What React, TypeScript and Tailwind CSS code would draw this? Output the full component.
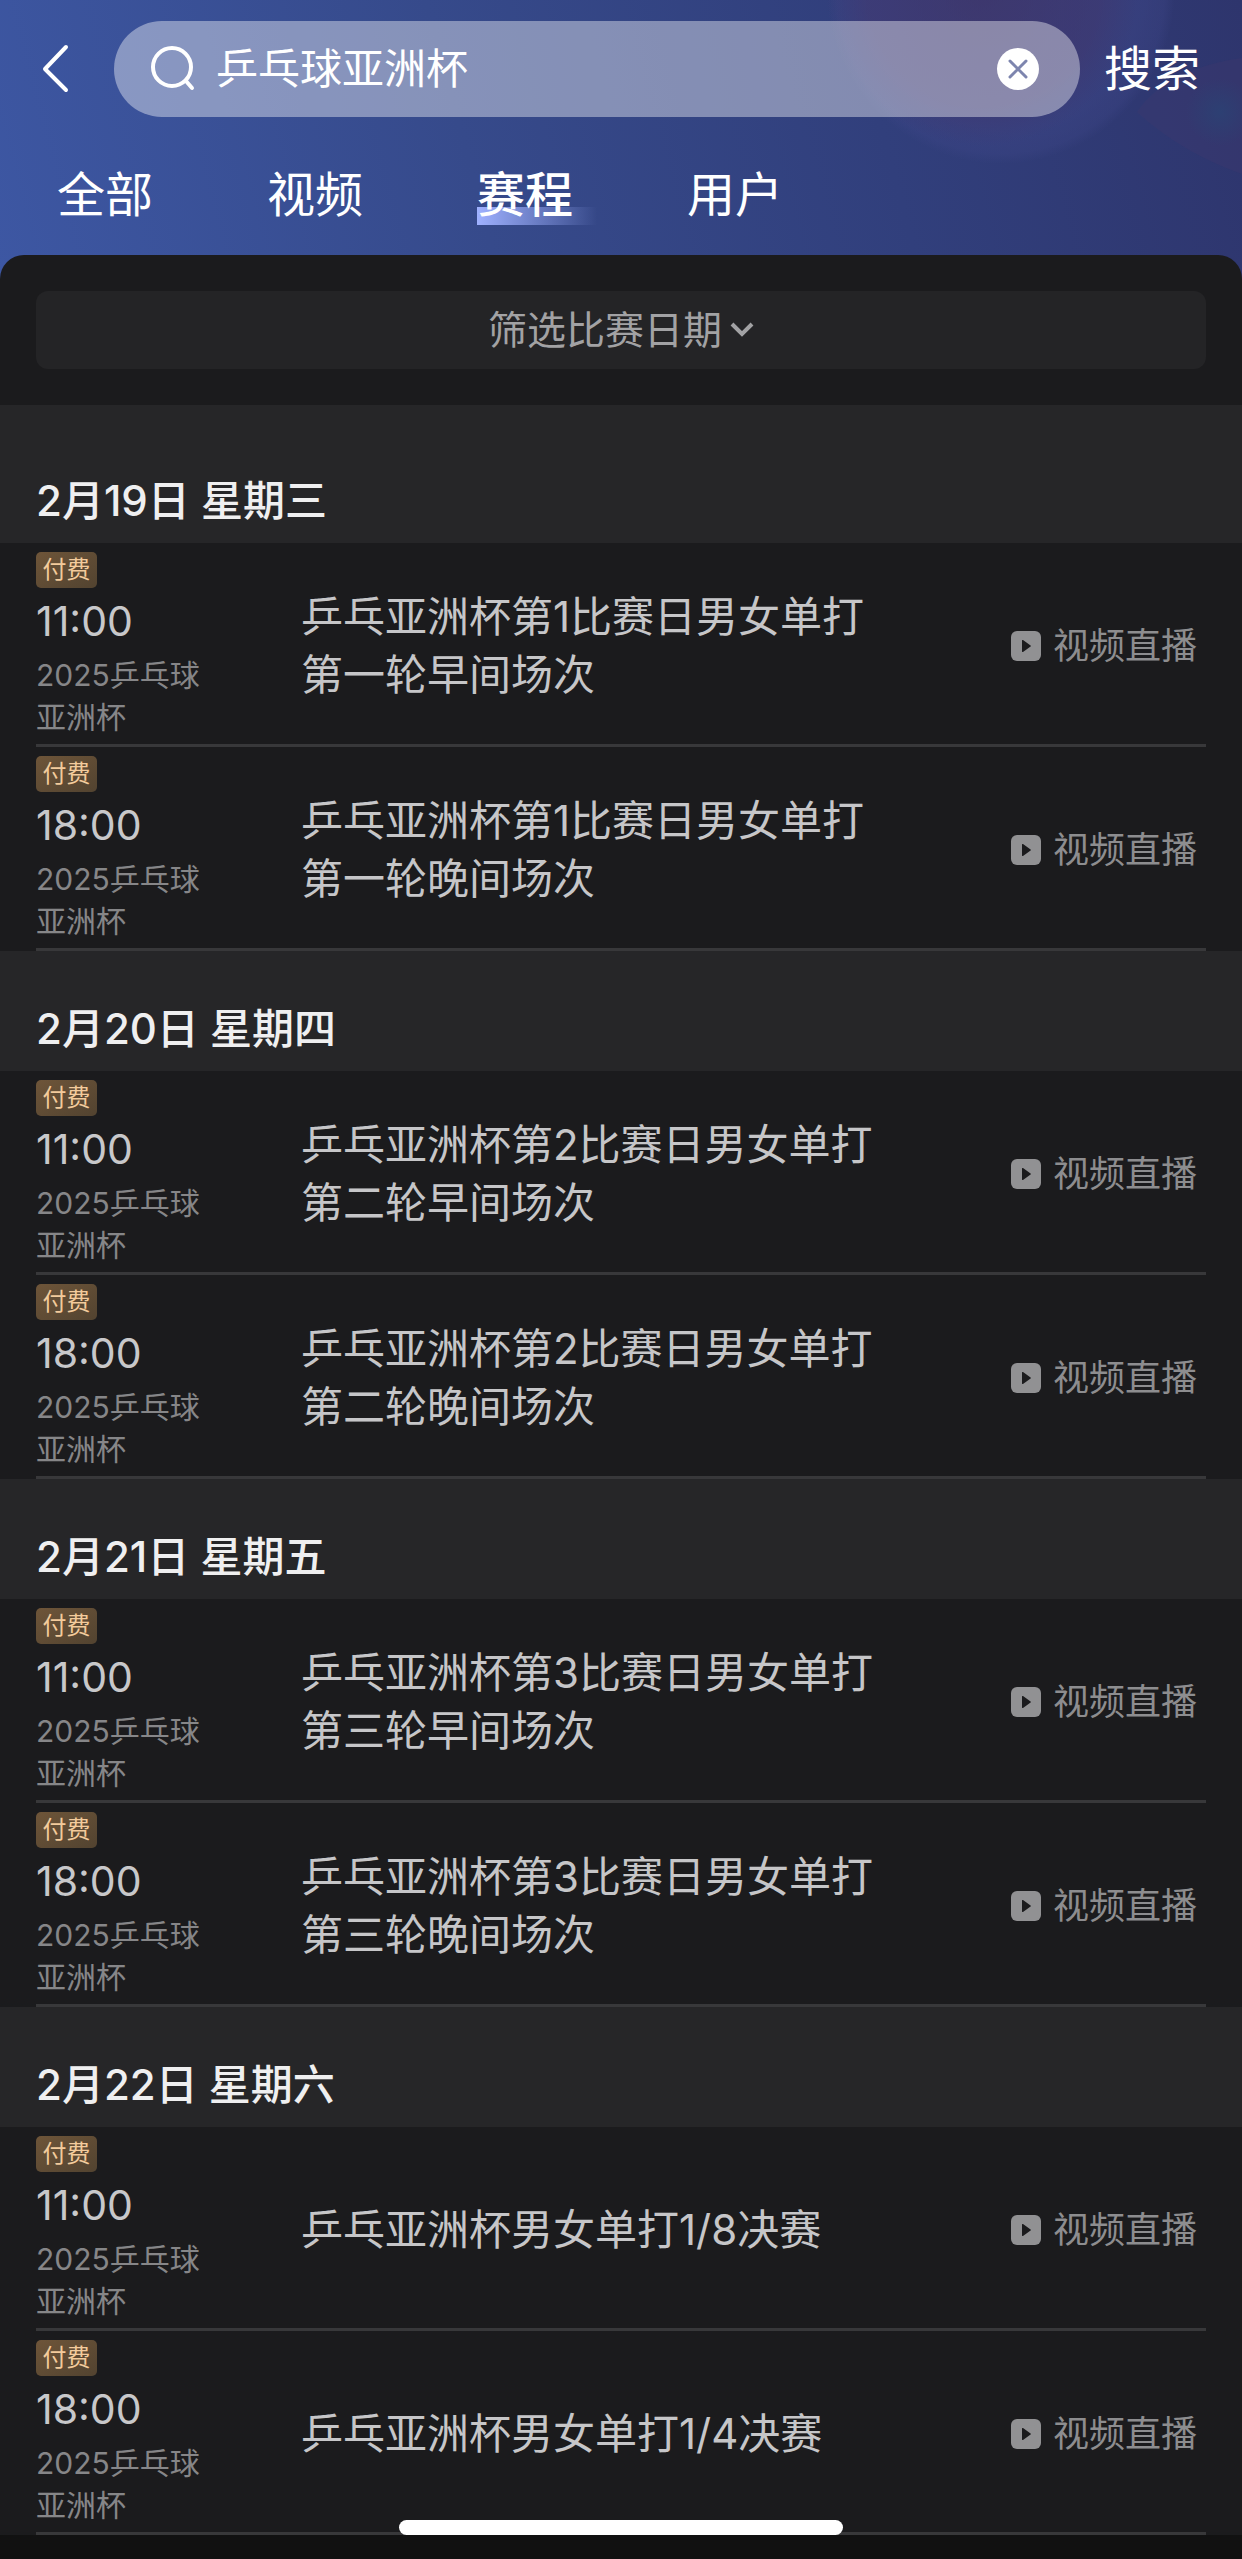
import { useState } from "react";

type Match = { time: string; title: string };
type Day = { date: string; matches: Match[] };

const tabs = ["全部", "视频", "赛程", "用户"];

const days: Day[] = [
  {
    date: "2月19日 星期三",
    matches: [
      { time: "11:00", title: "乒乓亚洲杯第1比赛日男女单打第一轮早间场次" },
      { time: "18:00", title: "乒乓亚洲杯第1比赛日男女单打第一轮晚间场次" },
    ],
  },
  {
    date: "2月20日 星期四",
    matches: [
      { time: "11:00", title: "乒乓亚洲杯第2比赛日男女单打第二轮早间场次" },
      { time: "18:00", title: "乒乓亚洲杯第2比赛日男女单打第二轮晚间场次" },
    ],
  },
  {
    date: "2月21日 星期五",
    matches: [
      { time: "11:00", title: "乒乓亚洲杯第3比赛日男女单打第三轮早间场次" },
      { time: "18:00", title: "乒乓亚洲杯第3比赛日男女单打第三轮晚间场次" },
    ],
  },
  {
    date: "2月22日 星期六",
    matches: [
      { time: "11:00", title: "乒乓亚洲杯男女单打1/8决赛" },
      { time: "18:00", title: "乒乓亚洲杯男女单打1/4决赛" },
    ],
  },
];

function HeaderGlow() {
  return (
    <svg
      className="pointer-events-none absolute right-0 top-0 h-[280px] w-[450px]"
      viewBox="0 0 450 280"
      aria-hidden="true"
    >
      <defs>
        <radialGradient id="core">
          <stop offset="0" stopColor="#42305f" stopOpacity="0.55" />
          <stop offset="0.75" stopColor="#42346a" stopOpacity="0.45" />
          <stop offset="1" stopColor="#42346a" stopOpacity="0" />
        </radialGradient>
        <radialGradient id="halo">
          <stop offset="0.8" stopColor="#3e4688" stopOpacity="0.5" />
          <stop offset="0.94" stopColor="#3e4688" stopOpacity="0.35" />
          <stop offset="1" stopColor="#3e4688" stopOpacity="0" />
        </radialGradient>
        <radialGradient id="teal">
          <stop offset="0" stopColor="#2b4274" stopOpacity="0.8" />
          <stop offset="1" stopColor="#2b4274" stopOpacity="0" />
        </radialGradient>
      </defs>
      <circle cx="209" cy="-10" r="174" fill="url(#halo)" />
      <circle cx="190" cy="-10" r="156" fill="url(#core)" />
      <path d="M345 112c20-30 60-48 105-54v116c-40-14-74-34-105-62z" fill="#42386c" opacity="0.3" />
      <circle cx="428" cy="112" r="34" fill="url(#teal)" />
    </svg>
  );
}

function SearchBar() {
  const [query, setQuery] = useState("乒乓球亚洲杯");

  return (
    <form
      className="relative flex h-[138px] items-center pl-9 pr-[42px]"
      onSubmit={(e) => e.preventDefault()}
    >
      <button type="button" aria-label="返回" className="mr-[38px] w-10 shrink-0">
        <svg width="40" height="54" viewBox="0 0 40 54" fill="none" stroke="#fff" strokeWidth="4" strokeLinecap="round" strokeLinejoin="round">
          <path d="M30 5 9 27l21 21" />
        </svg>
      </button>

      <div className="flex h-24 min-w-0 flex-1 items-center rounded-full bg-white/40 pl-9 pr-[41px]">
        <svg className="shrink-0" width="48" height="48" viewBox="0 0 48 48" fill="none" stroke="#fff" strokeWidth="4" strokeLinecap="round">
          <circle cx="22" cy="22" r="19" />
          <path d="m36 36 6 7" />
        </svg>
        <input
          type="text"
          aria-label="搜索内容"
          value={query}
          onChange={(e) => setQuery(e.target.value)}
          className="ml-[18px] min-w-0 flex-1 bg-transparent text-[42px] leading-[60px] text-white outline-none"
        />
        <button type="button" aria-label="清除" onClick={() => setQuery("")} className="shrink-0">
          <svg width="42" height="42" viewBox="0 0 42 42">
            <circle cx="21" cy="21" r="21" fill="#fff" />
            <path d="m13 13 16 16M29 13 13 29" stroke="#7d85ae" strokeWidth="3" strokeLinecap="round" />
          </svg>
        </button>
      </div>

      <button type="submit" className="ml-6 shrink-0 text-[48px] leading-[60px] text-white">
        搜索
      </button>
    </form>
  );
}

function PlayIcon() {
  return (
    <svg className="shrink-0" width="30" height="30" viewBox="0 0 30 30" aria-hidden="true">
      <rect width="30" height="30" rx="6" fill="#919193" />
      <path d="M11 9.500v11a.6.6 0 0 0 1 .4l7.600-5.300a.8.8 0 0 0 0-1.200L12 9.100a.6.6 0 0 0-1 .4z" fill="#1b1b1d" />
    </svg>
  );
}

function MatchRow({ match }: { match: Match }) {
  return (
    <li className="mx-9 flex h-[204px] items-center border-b-[3px] border-[#38383a]">
      <div className="w-[180px] shrink-0 self-start pt-[9px]">
        <span className="flex h-9 w-[61px] items-center justify-center rounded-[5px] bg-linear-to-br from-[#6e5539] to-[#524330] text-[24px] leading-9 text-[#f3cb9c]">
          付费
        </span>
        <time className="block text-[41px] leading-[66px] text-[#c8c8ca]">{match.time}</time>
        <p className="text-[30px] leading-[42px] text-[#868688]">2025乒乓球亚洲杯</p>
      </div>
      <h3 className="ml-[85px] mt-1 w-[590px] text-[42px] leading-[58px] text-[#c6c6c8]">
        {match.title}
      </h3>
      <a href="#live" className="ml-auto mr-[9px] mt-1 flex shrink-0 items-center gap-3 text-[36px] leading-[48px] text-[#8d8d8f]">
        <PlayIcon />
        视频直播
      </a>
    </li>
  );
}

export default function App() {
  const [active, setActive] = useState("赛程");

  return (
    <div className="relative min-h-screen bg-[#111111] pb-6 font-['Inter','Noto_Sans_CJK_SC',sans-serif]">
      <header className="relative overflow-hidden bg-linear-[75deg,#3d57a3_0%,#364a8b_38%,#313f7c_70%,#2e356d_100%] pb-6">
        <HeaderGlow />
        <SearchBar />

        <nav className="relative flex h-[117px] items-center gap-[114px] pb-1 pl-[57px]">
          {tabs.map((tab) => (
            <button
              key={tab}
              type="button"
              onClick={() => setActive(tab)}
              className={
                tab === active
                  ? "relative text-[48px] font-medium leading-[60px] text-white"
                  : "relative text-[48px] leading-[60px] text-white"
              }
            >
              {tab === active && (
                <span className="absolute bottom-0 left-0 h-[18px] w-[120px] bg-linear-to-r from-[#9fb1ff] to-transparent" />
              )}
              <span className="relative">{tab}</span>
            </button>
          ))}
        </nav>
      </header>

      <main className="relative -mt-6 overflow-hidden rounded-t-3xl bg-[#1b1b1d]">
        <div className="px-9 py-9">
          <button
            type="button"
            className="flex h-[78px] w-full items-center justify-center gap-2 rounded-xl bg-[#242426] text-[39px] leading-[54px] text-[#a2a2a4]"
          >
            筛选比赛日期
            <svg width="24" height="16" viewBox="0 0 24 16" fill="none" stroke="currentColor" strokeWidth="4">
              <path d="m2 2 10 10L22 2" />
            </svg>
          </button>
        </div>

        <div className="bg-[#262628] pt-[18px]">
          {days.map((day) => (
            <section key={day.date}>
              <h2 className="bg-[#262628] px-9 pb-3 pt-12 text-[42px] font-medium leading-[60px] text-[#efeff0]">
                {day.date}
              </h2>
              <ul className="bg-[#1b1b1d]">
                {day.matches.map((match) => (
                  <MatchRow key={match.time} match={match} />
                ))}
              </ul>
            </section>
          ))}
        </div>
      </main>

      {/* home indicator */}
      <div className="absolute bottom-6 left-1/2 h-[15px] w-[444px] -translate-x-1/2 rounded-full bg-white" />
    </div>
  );
}
